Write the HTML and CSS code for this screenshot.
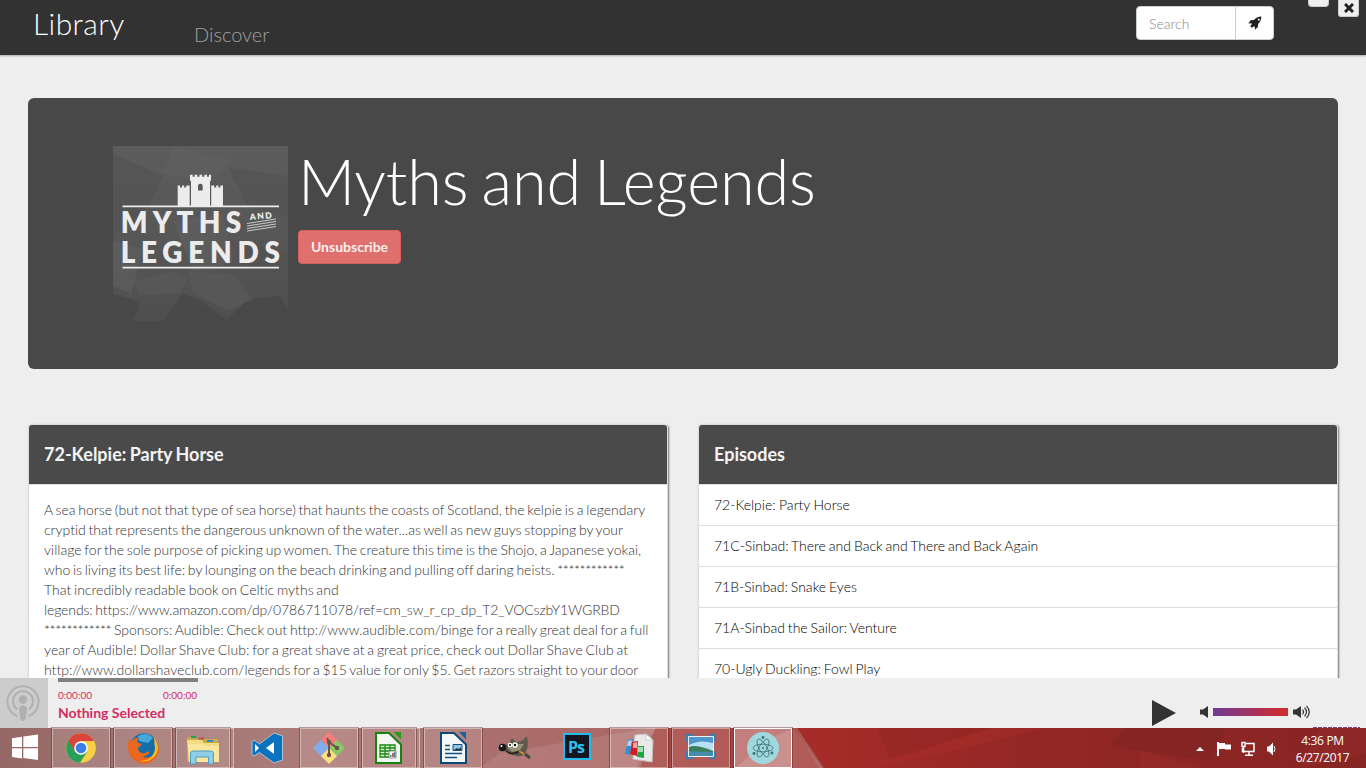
FILE: index.html
```html
<!DOCTYPE html>
<html lang="en">
<head>
<meta charset="utf-8">
<title>Library</title>
<link rel="stylesheet" href="styles.css">
</head>
<body>
<div class="screen">
  <header class="navbar">
    <a class="brand">Library</a>
    <a class="nav-link">Discover</a>
    <div class="search">
      <span class="search-input">Search</span>
      <span class="search-btn"><svg width="14" height="14" viewBox="0 0 14 14"><path fill="#222" fill-rule="evenodd" d="M13.300.5C10 .6 7.900 1.700 5.900 3.900L2.600 4.300.3 7.600l2.900-.3 .7.700-1.600 2.300 1.500 1.500 2.200-1.600.8.600.2 3 2.800-2.900.4-3C12.300 5.800 13.400 3.500 13.300.5zM9.900 3.200a1 1 0 1 1 1.200 1.400 1 1 0 0 1-1.200-1.400z"/></svg></span>
    </div>
    <div class="window-buttons">
      <span class="win-min"></span>
      <span class="win-close"><svg width="10" height="10" viewBox="0 0 10 10"><path d="M1 1l8 8M9 1L1 9" stroke="#222" stroke-width="3"/></svg></span>
    </div>
  </header>

  <main class="content">
    <section class="hero">
      <svg class="cover" width="175" height="175" viewBox="0 0 175 175">
        <defs><linearGradient id="cv" x1="0" y1="0" x2="0" y2="1"><stop offset="0" stop-color="#5c5c5c"/><stop offset=".6" stop-color="#565656"/><stop offset="1" stop-color="#4e4e4e"/></linearGradient></defs>
        <path fill="url(#cv)" d="M0 0h175v175H0z"/>
        <path fill="#525252" opacity=".6" d="M0 8l50 22-14 30L0 90zM115 22l60 8v40l-40-10zM118 95l57 10v45l-40-10z"/>
        <path fill="#616161" opacity=".5" d="M60 0l60 15-25 20L50 28zM60 75l50-8 10 50-40 8zM0 95l30 8-12 45L0 140z"/>
        <path fill="#464646" opacity=".7" d="M70 147l18 8 27 20H50zM135 153l31-3 9 12v13h-62zM0 148l28 8-8 19H0z"/>
        <path fill="#5c5c5c" opacity=".6" d="M75 125l45 4 20 24-25 12-35-18zM20 135l40-10 15 8-8 14-40 2z"/>
        <g fill="#ececec">
          <path fill-rule="evenodd" d="M77 28.700h2.600v2h2v-2h2.600v2h2.300v-2h2.600v2h2.300v-2H94v2h2v-2h2V34l-1 1.500V60H78V35.500L77 34zM85 44.500h4.700V40a2.350 2.350 0 0 0-4.700 0z"/>
          <path d="M64.700 39.500H67v2h2v-2h2.200v2h2v-2h3.500V60h-12zM98.200 39.500h3v2h2v-2h2.200v2h2v-2h2.600V60H98.200z"/>
          <path d="M9.500 59.500H166v1.800H9.500zM9.500 120.800H166v1.800H9.500z"/>
          <g transform="scale(.9 1)">
            <text class="cover-text" x="8.500" y="87.300" textLength="134" lengthAdjust="spacing" font-size="31">MYTHS</text>
            <text class="cover-text" x="8.500" y="117.300" textLength="177" lengthAdjust="spacing" font-size="31">LEGENDS</text>
          </g>
          <text class="cover-text" x="137" y="74" textLength="22" font-size="8.500" transform="rotate(-5 137 74)">AND</text>
        </g>
        <path stroke="#d8d8d8" stroke-width=".9" d="M134 77.500l29-4.500M134 80l29-4.500M134 82.500l29-4.500M134 85l29-4.500"/>
      </svg>
      <div class="hero-text">
        <h1>Myths and Legends</h1>
        <span class="unsubscribe">Unsubscribe</span>
      </div>
    </section>

    <div class="columns">
      <section class="panel">
        <h3 class="panel-title">72-Kelpie: Party Horse</h3>
        <p class="description"><span class="wide-line">A sea horse (but not that type of sea horse) that haunts the coasts of Scotland, the kelpie is a legendary</span><br>cryptid that represents the dangerous unknown of the water...as well as new guys stopping by your<br><span class="wide-line">village for the sole purpose of picking up women. The creature this time is the Shojo, a Japanese yokai,</span><br>who is living its best life: by lounging on the beach drinking and pulling off daring heists. <span class="stars">************</span><br><span class="wide-line">That incredibly readable book on Celtic myths and</span><br><span class="link-line">legends: https://www.amazon.com/dp/0786711078/ref=cm_sw_r_cp_dp_T2_VOCszbY1WGRBD</span><br><span class="stars">************</span> Sponsors: Audible: Check out http://www.audible.com/binge for a really great deal for a full<br><span class="wider-line">year of Audible! Dollar Shave Club: for a great shave at a great price, check out Dollar Shave Club at</span><br>http://www.dollarshaveclub.com/legends for a $15 value for only $5. Get razors straight to your door</p>
      </section>
      <section class="panel">
        <h3 class="panel-title">Episodes</h3>
        <ul class="episodes">
          <li>72-Kelpie: Party Horse</li>
          <li>71C-Sinbad: There and Back and There and Back Again</li>
          <li>71B-Sinbad: Snake Eyes</li>
          <li>71A-Sinbad the Sailor: Venture</li>
          <li>70-Ugly Duckling: Fowl Play</li>
        </ul>
      </section>
    </div>
  </main>

  <footer class="player">
    <div class="thumb"><svg width="48" height="50" viewBox="0 0 48 50"><g fill="none" stroke="#b0b0b0" stroke-width="1.900"><path d="M17.500 38.200a15.500 15.500 0 1 1 11 0"/><path d="M17.300 31.300a10 10 0 1 1 11.400 0"/></g><circle cx="23" cy="21.500" r="4.200" fill="#b0b0b0"/><path fill="#b0b0b0" d="M19 29.500q4-4 8 0l-1 10q-.5 3.500-3 3.500t-3-3.500z"/></svg></div>
    <div class="now">
      <div class="progress"></div>
      <div class="times"><span>0:00:00</span><span>0:00:00</span></div>
      <div class="track">Nothing Selected</div>
    </div>
    <svg class="play" width="24" height="26" viewBox="0 0 24 26"><path fill="#333" d="M0 0l24 13L0 26z"/></svg>
    <svg class="vol-low" width="9" height="12" viewBox="0 0 9 12"><path fill="#333" d="M0 3.500h3L8 0v12L3 8.500H0z"/></svg>
    <div class="volume"></div>
    <svg class="vol-high" width="18" height="14" viewBox="0 0 18 14"><path fill="#333" d="M0 4.500h3L8 1v12L3 9.500H0z"/><path fill="none" stroke="#333" stroke-width="1.200" d="M9.500 4.700q2 2.300 0 4.600M11.500 2.700q4 4.300 0 8.600M13.500.8q5.500 6.200 0 12.400"/></svg>
    <div class="ticks"></div>
  </footer>

  <div class="taskbar">
    <svg class="wallpaper" width="1366" height="40" viewBox="0 0 1366 40">
      <defs>
        <linearGradient id="tb" x1="0" x2="1"><stop offset="0" stop-color="#956765"/><stop offset=".18" stop-color="#a07370"/><stop offset=".32" stop-color="#a97b78"/><stop offset=".5" stop-color="#ab7573"/><stop offset="1" stop-color="#a85a56"/></linearGradient>
        <linearGradient id="red" x1="0" x2="1"><stop offset="0" stop-color="#a72d29"/><stop offset=".6" stop-color="#a52c28"/><stop offset=".75" stop-color="#942725"/><stop offset="1" stop-color="#862523"/></linearGradient>
      </defs>
      <path fill="url(#red)" d="M0 0h1366v40H0z"/>
      <path fill="url(#tb)" d="M0 0h797l27 40H0z"/>
      <path fill="#a53431" opacity=".65" d="M655 0h140l24 40H640z"/>
      <path fill="#c99794" opacity=".3" d="M500 25L650 0h6l-20 40H480zM736 40l30-28 28-12 28 40z"/>
      <path fill="#ac302a" opacity=".4" d="M882 32L992 0h50L930 28 870 40z"/>
      <path fill="#8b2422" opacity=".35" d="M877 0h112L920 23l-30 8z"/>
      <path fill="#752322" opacity=".35" d="M1125 0h100l-15 33-100-15z"/>
      <path fill="#a23430" opacity=".25" d="M1140 22l50 14 10 4h-60zM1300 40l20-40h46v25z"/>
    </svg>
    <div class="apps">
      <div class="start"><svg width="58" height="40" viewBox="0 0 58 40"><path fill="#fff" d="M12 10.200l10-1.500V19H12zM23.300 8.500L38 6.500V19H23.300zM12 20.200h10v10.300l-10-1.400zM23.300 20.200H38V32l-14.700-2z"/></svg></div>
      <div class="app open"><svg width="58" height="40" viewBox="0 0 58 40"><circle cx="29" cy="20" r="14.800" fill="#f8cf45"/><path fill="#27a05a" d="M29 20L16.200 12.500A14.800 14.800 0 0 0 28 34.800L35 24z"/><path fill="#d9453a" d="M29 13h13a14.800 14.800 0 0 0-25.800-.500L22.500 23z"/><circle cx="29" cy="20" r="6.800" fill="#fff"/><circle cx="29" cy="20" r="5.300" fill="#3c7ee8"/></svg></div>
      <div class="app open"><svg width="58" height="40" viewBox="0 0 58 40"><circle cx="30" cy="18.500" r="13.300" fill="#176da8"/><path fill="#42a9d8" d="M24 8q9-5 15 2l-5 5-9-2z"/><path fill="#e9681d" d="M15 11l3 2q3-4 7-3-3 3-1 5l4 1-4 4q0 6 7 5l5-2q-2 6-8 5 7 4 12-2 4-6 1-15 8 12 0 20-8 8-18 3T14 17z"/><path fill="#f6bd28" d="M40 9q8 13-1 21-6 5-14 3 14 0 16-12z"/></svg></div>
      <div class="app open stacked"><svg width="54" height="40" viewBox="0 0 54 40"><path fill="#c9a949" d="M11 9h7l2 2h22v23H11z"/><path fill="#f0dc82" d="M11 12h15l2 3h15v19H13z"/><path fill="#f8e79c" d="M12 16h15l2 2h14v16H13z"/><path fill="#20a050" d="M15 8h5v2h-5z"/><path fill="#c94732" d="M23 9.500h5v2h-5z"/><path fill="#328ac5" d="M31 12h6v2h-6z"/><path fill="#8dcee8" stroke="#4d9fc4" d="M14.500 25q0-2 3-2h17q3 0 3 2v11h-5v-7H20v7h-5.500z"/></svg></div>
      <div class="app vs"><svg width="58" height="40" viewBox="0 0 58 40"><path fill="#0b72bd" stroke="#c6d3e2" stroke-width=".8" d="M36 5l8.500 3v24L36 35 21.500 24.500 16 28l-2-1.300V13.500l2-1.500 5.500 4z"/><path fill="#fff" d="M36 14l-8 6 8 6zM17 16v8l4-4z"/></svg></div>
      <div class="app open"><svg width="58" height="40" viewBox="0 0 58 40"><path fill="#f57e79" d="M29 4l8.500 8.200-8.500 7.500-8-8z"/><path fill="#82adea" d="M21 12l8 8-8.300 8L13 20z"/><path fill="#87c865" d="M37 12l8 8-8 8-8-8z"/><path fill="#fbe27f" d="M29 20l8 8-8 8-8-8z"/><path fill="none" stroke="#70504f" stroke-width="2" d="M27 10l2 4v14M29 14l8 6"/><g fill="#70504f"><circle cx="29" cy="14" r="2.200"/><circle cx="37" cy="20" r="2.200"/><circle cx="29" cy="27" r="2.200"/></g></svg></div>
      <div class="app open stacked"><svg width="54" height="40" viewBox="0 0 54 40"><path fill="#f5f8f2" stroke="#16830f" stroke-width="2" d="M14 5h13l12 11.500V35H14z"/><path fill="#269b15" d="M32 4h7v7zM39 4v7.500L31.500 4z"/><path fill="#e2f3d9" stroke="#198812" stroke-width="1.300" d="M18 17h15v12H18zM18 20h15M18 23h15M18 26h15M23 17v12M28 17v12"/><path fill="#fff" stroke="#777" stroke-width=".8" d="M27 23h7v7h-7z"/><path fill="#dd6222" d="M30 25h2v4h-2z"/><path fill="#3188bd" d="M28 27h1.500v2H28zM32 24h1.500v5H32z"/></svg></div>
      <div class="app open"><svg width="58" height="40" viewBox="0 0 58 40"><path fill="#f4f7fa" stroke="#0c4974" stroke-width="2" d="M17 5h13l12 11.500V35H17z"/><path fill="#1066a1" d="M35 4h7v7.500z"/><path stroke="#124e77" stroke-width="1.700" d="M21 17.500h5M21 21.500h5M21 25.500h17M21 29.500h12"/><path fill="#90c7e8" stroke="#124e77" d="M29 16.500h9v6h-9z"/><path fill="#263640" d="M30 22l3-2 2 1 2-2v3z"/></svg></div>
      <div class="app"><svg width="58" height="40" viewBox="0 0 58 40"><path fill="#5e594b" d="M17 17l6-1 3-6 4 4q4 0 7-2l4-4q2 10-1 16-3 5-9 4-9-1-13-6z"/><path fill="#989079" d="M21 19l8-3 9 0-4 6-8 2z"/><circle cx="16.500" cy="19.500" r="3.800" fill="#14181b"/><circle cx="15.500" cy="18" r="1" fill="#fff"/><g fill="#fff"><circle cx="24" cy="17" r="2.300"/><circle cx="29" cy="17" r="2.700"/></g><circle cx="24" cy="17" r="1"/><circle cx="29" cy="17" r="1.200"/><path stroke="#25211e" stroke-width="1.500" d="M20 23q6 5 14 0" fill="none"/><path stroke="#d2892f" stroke-width="2" d="M33 23l5 3"/><path stroke="#484744" stroke-width="3" d="M39 26l5 4"/></svg></div>
      <div class="app"><svg width="58" height="40" viewBox="0 0 58 40"><path fill="#161522" stroke="#21bcee" stroke-width="2" d="M16 6h26v25H16z"/><text class="ps" x="20" y="24.500" textLength="17">Ps</text></svg></div>
      <div class="app open"><svg width="58" height="40" viewBox="0 0 58 40"><path fill="#e9e9e9" stroke="#c5c5c5" d="M25 7l11-1 7 6-1 22-19-3z"/><path fill="#fff" stroke="#bbb" stroke-width=".7" d="M36 6v6h7z"/><path fill="#2d91d7" d="M18 12l5-1-3 16-5-1z"/><path fill="#d31b25" d="M22 14l6-1-1 15-7-2z"/><path fill="#20a544" d="M28 18h6v12l-7-1z"/><path fill="#fff" opacity=".6" d="M18 13l4-1-1 6h-4zM23 15l4-1v6h-4zM28 19h5v5h-5z"/></svg></div>
      <div class="app open"><svg width="58" height="40" viewBox="0 0 58 40"><path fill="#397db2" d="M14 6h7v3h16V6h7v8h-2v9h2v8h-7v-2H21v2h-7v-8h2v-9h-2z"/><path fill="#b8dff3" stroke="#e9f2f5" d="M16.500 8.500h25v20h-25z"/><path fill="#4e96cd" d="M17 9h24v6q-13-4-24 2z"/><path fill="#3a805b" d="M17 19q7-3 24 4v2H17z"/><path fill="#448dac" d="M17 23q12 1 24 1v4H17z"/></svg></div>
      <div class="app open active"><svg width="58" height="40" viewBox="0 0 58 40"><circle cx="29" cy="20" r="16" fill="#a1d8df"/><g fill="none" stroke="#3c7078" stroke-width=".8"><ellipse cx="29" cy="20" rx="10" ry="3.800"/><ellipse cx="29" cy="20" rx="10" ry="3.800" transform="rotate(60 29 20)"/><ellipse cx="29" cy="20" rx="10" ry="3.800" transform="rotate(120 29 20)"/></g><g fill="#3c7078"><circle cx="29" cy="20" r="1"/><circle cx="20" cy="25.500" r="1.400"/><circle cx="38" cy="25" r="1.400"/><circle cx="29" cy="9.500" r="1.400"/></g></svg></div>
    </div>
    <svg class="tray" width="90" height="40" viewBox="0 0 90 40"><path fill="#fff" d="M6 23l4-4 4 4zM27 14h2v14h-2zM29 15h6v1.500h6v5h-6V21h-6z"/><g fill="none" stroke="#fff" stroke-width="1.500"><path d="M56 15.500h8v8H52.500V20M59 24v3M55 27.300h8M52 14.500h3v4h-3zM53.500 19v6"/><path stroke-width="1" d="M84 18q2 3 0 6"/></g><path fill="#fff" d="M77 18.500h2l4-4v13l-4-4h-2z"/></svg>
    <div class="clock"><span>4:36 PM</span><span>6/27/2017</span></div>
  </div>
</div>
</body>
</html>
```
FILE: styles.css
```css
* { box-sizing: border-box; }
body { margin: 0; font-family: Lato, sans-serif; font-weight: 300; font-variant-ligatures: none; }
.screen { width: 1366px; height: 768px; overflow: hidden; display: flex; flex-direction: column; background: #eee; }
.navbar { flex: none; height: 55px; display: flex; align-items: flex-start; background: #323232; box-shadow: 0 1px 2px rgba(0, 0, 0, .3); color: #fff; }
.brand { width: 161px; margin-left: 33px; font-size: 30px; letter-spacing: .4px; line-height: 47px; }
.nav-link { font-size: 20px; line-height: 68px; height: 55px; color: #a0a0a0; }
.search { display: flex; width: 138px; height: 34px; margin: 6px 35px 0 auto; background: #fff; border: 1px solid #ccc; border-radius: 4px; }
.search-input { width: 99px; padding-left: 12px; font-size: 14px; line-height: 34px; color: #888; border-right: 1px solid #ccc; }
.search-btn { flex: 1; display: flex; align-items: center; justify-content: center; }
.window-buttons { display: flex; align-items: flex-start; gap: 9px; margin: 0 7px 0 -1px; }
.win-min { width: 21px; height: 7px; border: 1px solid #ccc; border-top: 0; border-radius: 0 0 4px 4px; background: #eee; }
.win-close { width: 21px; height: 17px; display: flex; align-items: center; justify-content: center; border: 1px solid #ccc; border-top: 0; border-radius: 0 0 3px 3px; background: #eee; }
.content { height: 623px; overflow: hidden; padding: 43px 28px 0; word-spacing: -.067em; }
.hero { height: 271px; padding: 48px 85px; display: flex; gap: 10px; border-radius: 6px; background: #484848; }
.cover-text { font-family: Lato, sans-serif; font-weight: 800; }
.hero-text { color: #fff; }
.hero h1 { margin: 0 0 14px; height: 70px; font-size: 63px; line-height: 69px; font-weight: 300; white-space: nowrap; word-spacing: -4px; letter-spacing: -.1px; }
.unsubscribe { display: block; width: 103px; height: 34px; border: 1px solid #d9605d; border-radius: 4px; background: #df706d; text-align: center; font-size: 14px; line-height: 32px; font-weight: 700; color: #f8eeee; }
.columns { display: flex; gap: 30px; margin-top: 55px; }
.panel { width: 640px; height: 300px; overflow: hidden; flex: none; border: 1px solid #ddd; border-bottom: 0; border-radius: 4px; background: #fff; box-shadow: 1px 1px 2px rgba(0, 0, 0, .5); }
.panel-title { margin: 0; height: 60px; padding-left: 15px; font-size: 18px; line-height: 59px; font-weight: 700; color: #f4f4f4; background: #4a4a4a; border-bottom: 1px solid #ddd; }
.description { margin: 15px 0 0 15px; font-size: 14px; line-height: 20px; color: #333; white-space: nowrap; }
.stars { letter-spacing: -.35px; }
.link-line { letter-spacing: -.01px; }
.wide-line { letter-spacing: .02px; }
.wider-line { letter-spacing: .06px; }
.episodes { margin: 0; padding: 0; list-style: none; word-spacing: -.02em; letter-spacing: -.01px; }
.episodes li { height: 41px; padding-left: 15px; font-size: 14px; line-height: 40px; color: #000; border-bottom: 1px solid #ddd; }
.episodes li:nth-child(n+2) { word-spacing: -.06em; }
.link-line { letter-spacing: -.11px; }
.player { flex: none; display: flex; height: 50px; background: #eee; }
.thumb { width: 48px; height: 50px; background: #ccc; }
.now { width: 140px; margin-left: 10px; color: #d42d63; }
.progress { height: 4px; background: #808080; }
.times { display: flex; justify-content: space-between; font-size: 10px; line-height: 12px; margin: 7px 1px 0 0; font-weight: 400; }
.track { margin-top: 3px; font-size: 14px; line-height: 18px; font-weight: 700; }
.play { margin: 22px 0 0 954px; }
.vol-low { margin: 28px 0 0 24px; }
.volume { width: 75px; height: 8px; margin: 30px 5px 0 4px; background: linear-gradient(90deg, #713993, #d22d2a); }
.vol-high { margin-top: 27px; }
.ticks { align-self: flex-end; width: 47px; height: 1px; margin-left: 2px; background: repeating-linear-gradient(90deg, #7a4070 0 4px, #eee 4px 5px); }
.taskbar { position: relative; flex: none; display: flex; height: 40px; color: #fff; }
.wallpaper { position: absolute; inset: 0; }
.apps { position: relative; display: flex; gap: 4px; }
.apps svg, .tray, .thumb svg { display: block; }
.start { width: 48px; overflow: hidden; }
.app { position: relative; width: 58px; height: 40px; }
.open { background: rgba(255, 255, 255, .13); border: 1px solid rgba(255, 255, 255, .4); outline: 1px solid rgba(80, 30, 30, .4); }
.open svg { margin: -1px; }
.stacked { width: 54px; margin-right: 4px; box-shadow: 4px 0 0 -1px #a98885, 4px 0 0 0 #d4b8b5; }
.active { background: rgba(255, 255, 255, .32); border-color: #fff; }
.ps { font: 700 16px "Open Sans", sans-serif; fill: #2ac2f2; }
.tray { position: relative; margin-left: 398px; }
.clock { position: relative; flex: 1; margin-right: 1px; display: flex; flex-direction: column; align-items: center; padding-top: 4px; font: 400 12px/17px "Open Sans", sans-serif; letter-spacing: -.35px; }
```
